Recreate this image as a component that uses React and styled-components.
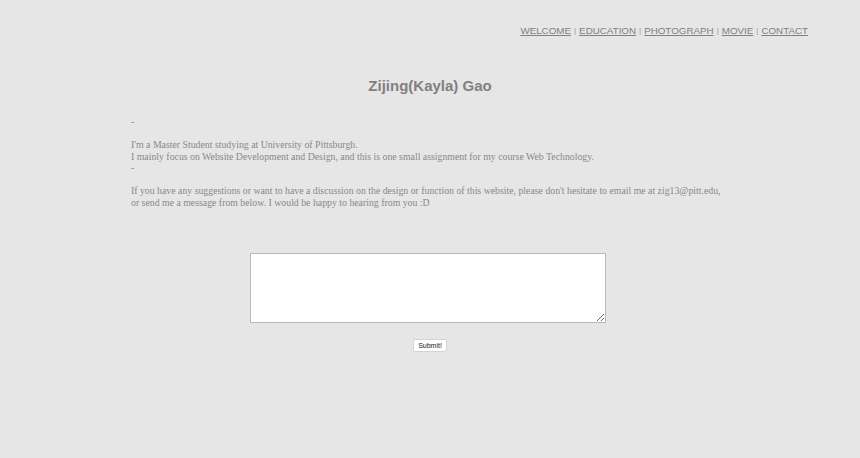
import React from 'react'
import styled, { createGlobalStyle } from 'styled-components'

const Global = createGlobalStyle`
  html, body {
    margin: 0;
    padding: 0;
    background: #e6e6e6;
  }
  body {
    font-family: "Liberation Serif", serif;
    color: #888;
  }
`

const Page = styled.div`
  width: 860px;
  height: 458px;
  background: #e6e6e6;
  overflow: hidden;
`

const Nav = styled.nav`
  display: flex;
  justify-content: flex-end;
  align-items: center;
  padding: 24px 52px 0 0;
  font-family: "Liberation Sans", Arial, sans-serif;
  font-size: 9.8px;
  line-height: 13px;
  color: #808080;
`

const NavLink = styled.a`
  color: #808080;
  text-decoration: underline;
  cursor: pointer;
`

const Sep = styled.span`
  color: #999;
  font-size: 8px;
  margin: 0 3px;
`

const Title = styled.h1`
  margin: 39px 0 0 0;
  text-align: center;
  font-family: "Liberation Sans", Arial, sans-serif;
  font-weight: 700;
  font-size: 15px;
  line-height: 20px;
  color: #808080;
`

const Intro = styled.div`
  padding: 20px 60px 0 131px;
  font-size: 9.8px;
  line-height: 11.5px;
  color: #888;
  white-space: nowrap;
`

const Para = styled.p`
  margin: 0 0 11.5px 0;
`

const Form = styled.form`
  display: flex;
  flex-direction: column;
  align-items: center;
  padding-top: 33px;
`

const Message = styled.textarea`
  width: 356px;
  height: 70px;
  box-sizing: border-box;
  border: 1px solid #b8b8b8;
  background: #fff;
  padding: 2px;
  margin: 0 0 0 -4px;
`

const Submit = styled.button`
  margin-top: 16px;
  font-family: "Liberation Sans", Arial, sans-serif;
  font-size: 7px;
  line-height: 9px;
  padding: 1px 4px;
  background: #fff;
  border: 1px solid #d4d4d4;
  border-radius: 2px;
  color: #222;
  cursor: pointer;
`

const links = ['WELCOME ', 'EDUCATION', 'PHOTOGRAPH', 'MOVIE', 'CONTACT']

export default function App() {
  return (
    <Page>
      <Global />
      <Nav>
        {links.map((l, i) => (
          <React.Fragment key={l}>
            {i > 0 && <Sep>|</Sep>}
            <NavLink>{l}</NavLink>
          </React.Fragment>
        ))}
      </Nav>
      <Title>Zijing(Kayla) Gao</Title>
      <Intro>
        <Para>-</Para>
        <Para>
          I'm a Master Student studying at University of Pittsburgh.<br />
          I mainly focus on Website Development and Design, and this is one small assignment for my course Web Technology.<br />
          -
        </Para>
        <Para>
          If you have any suggestions or want to have a discussion on the design or function of this website, please don't hesitate to email me at zig13@pitt.edu,<br />
          or send me a message from below. I would be happy to hearing from you :D
        </Para>
      </Intro>
      <Form onSubmit={e => e.preventDefault()}>
        <Message />
        <Submit type="submit">Submit!</Submit>
      </Form>
    </Page>
  )
}
